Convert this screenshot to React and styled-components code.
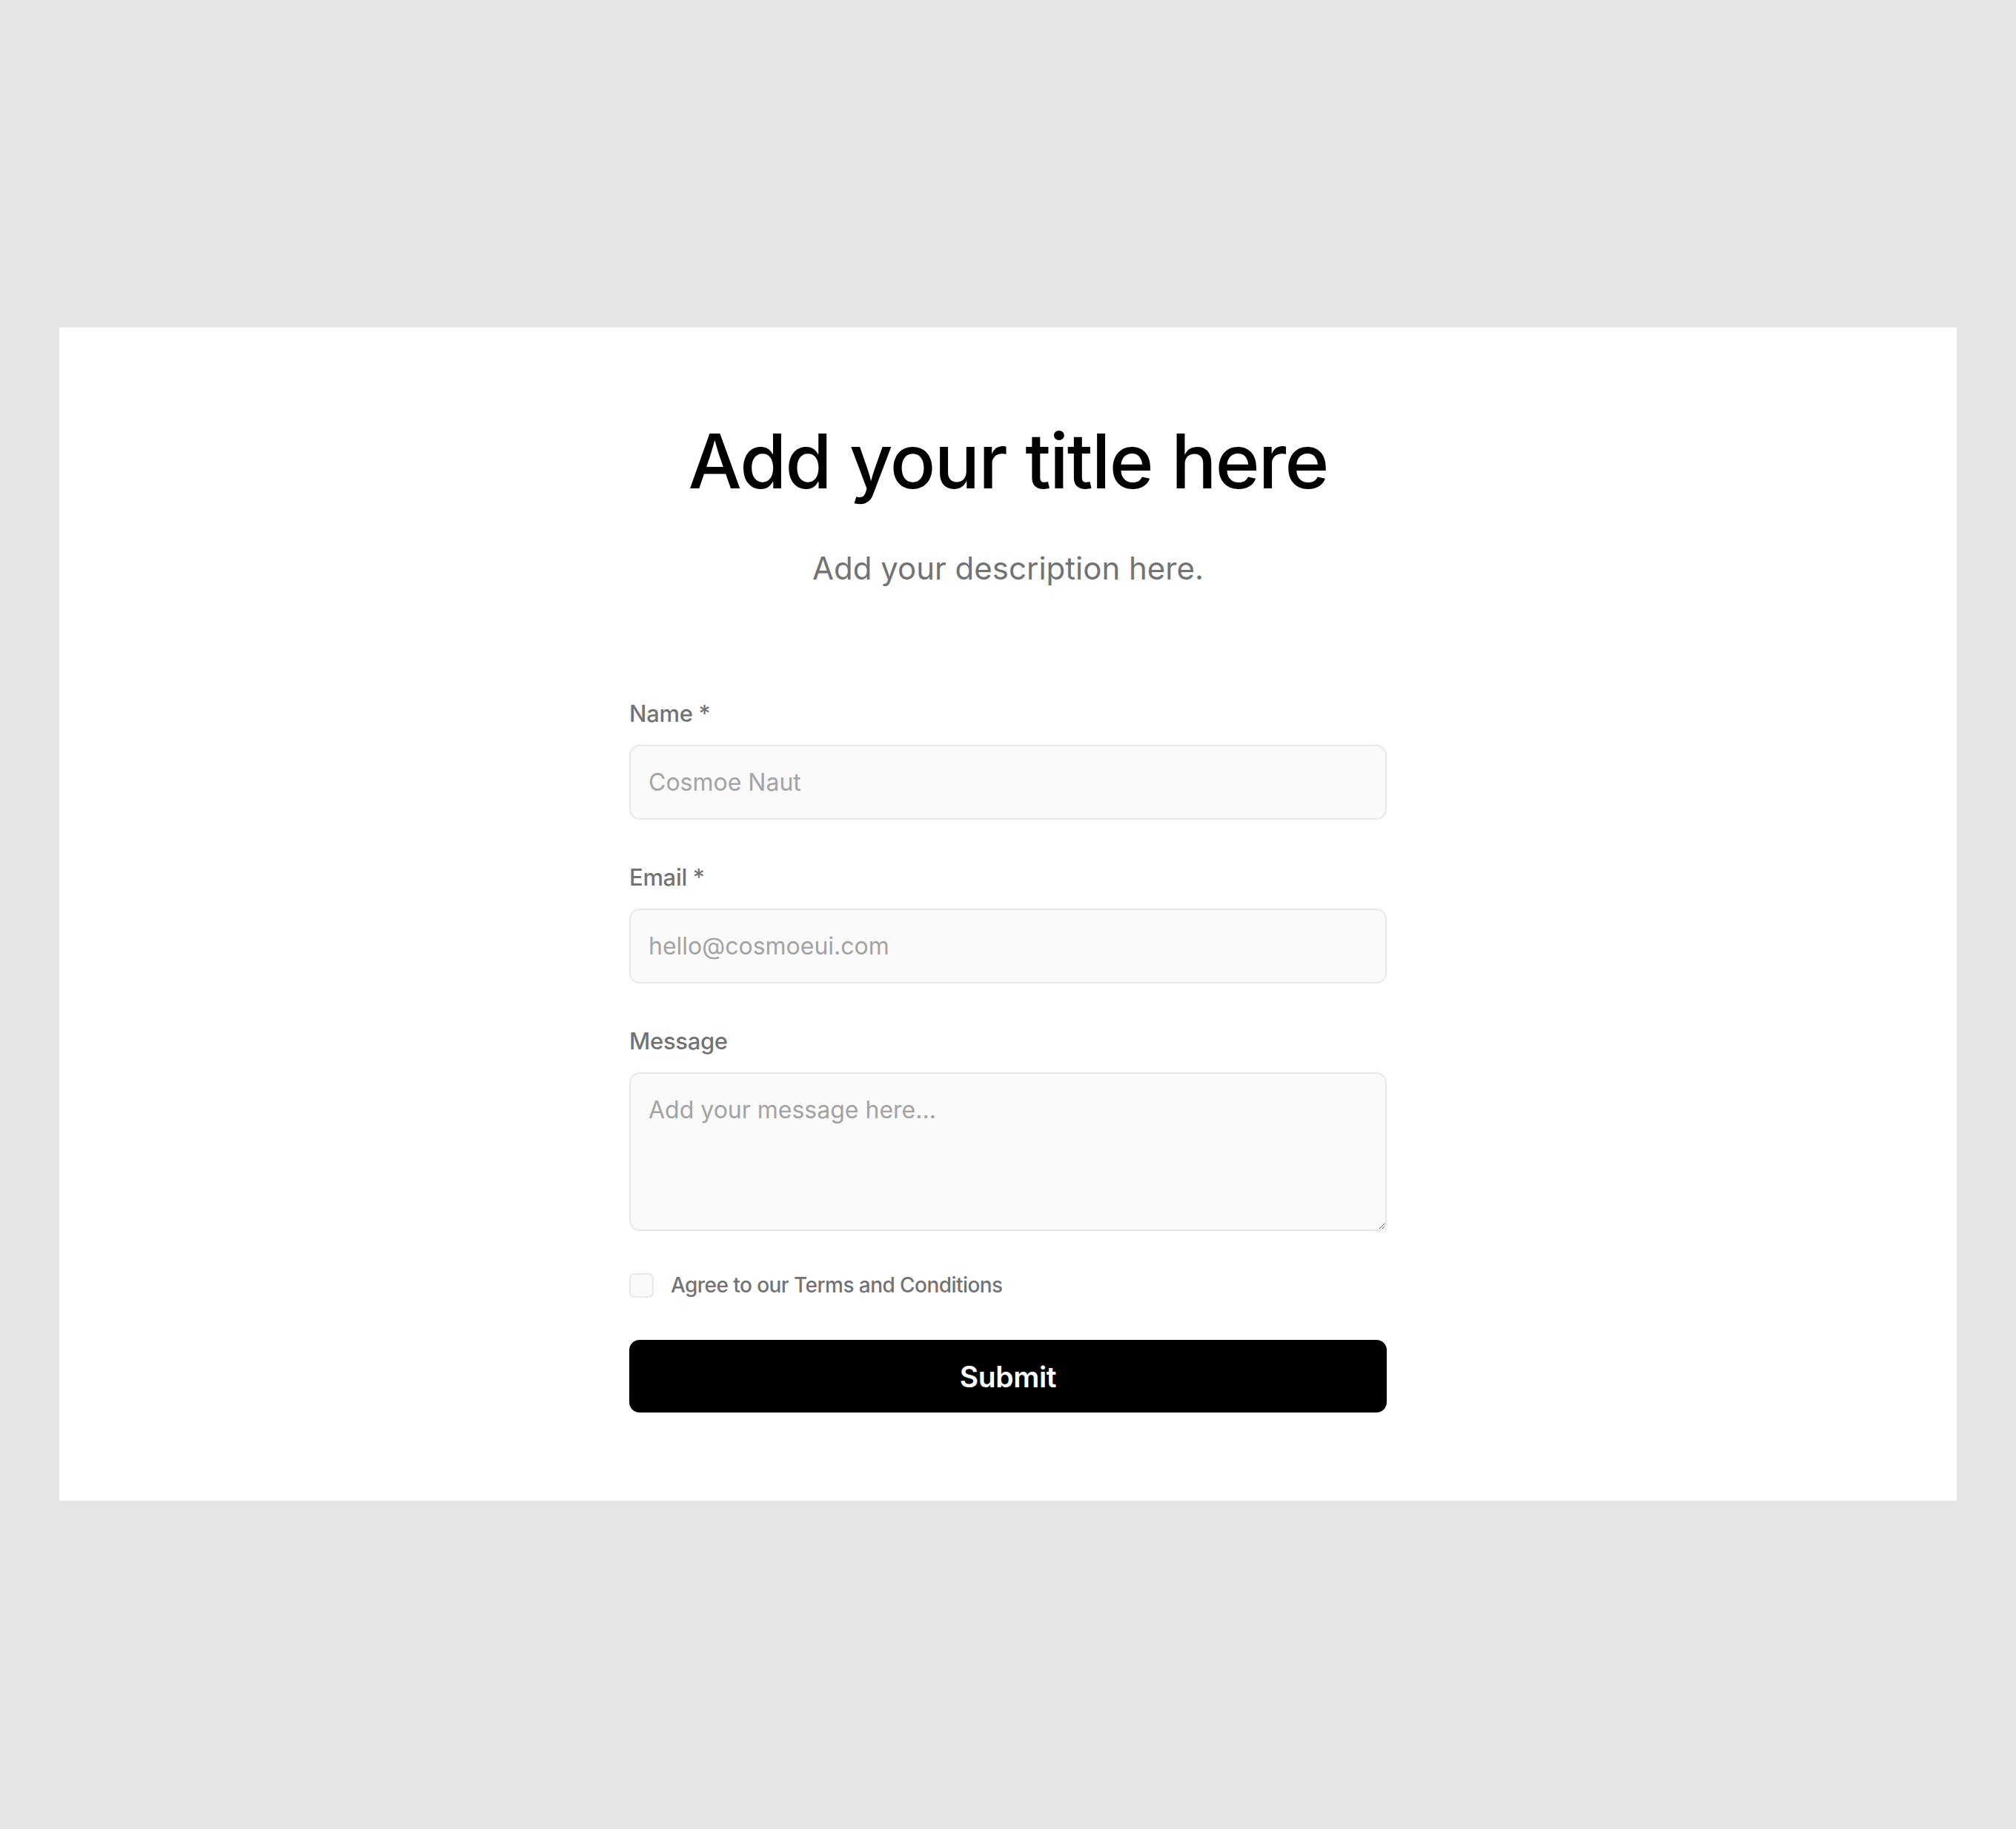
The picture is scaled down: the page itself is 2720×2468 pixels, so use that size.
import React from "react";
import styled, { createGlobalStyle } from "styled-components";

const GlobalStyle = createGlobalStyle`
  html, body {
    margin: 0;
    padding: 0;
    background: #e5e5e5;
  }
  * {
    box-sizing: border-box;
  }
`;

const Page = styled.div`
  min-height: 100vh;
  padding: 442px 80px 0 80px;
  font-family: Inter, "Noto Sans", sans-serif;
`;

const Card = styled.section`
  background: #ffffff;
  display: flex;
  flex-direction: column;
  align-items: center;
  padding: 119px 0 119px 0;
`;

const Title = styled.h1`
  margin: 0;
  font-size: 102px;
  line-height: 1.2;
  font-weight: 500;
  letter-spacing: -0.018em;
  color: #000000;
`;

const Description = styled.p`
  margin: 52px 0 0 0;
  font-size: 42px;
  line-height: 1.5;
  font-weight: 400;
  color: #737373;
`;

const Form = styled.form`
  width: 1022px;
  margin-top: 144px;
  display: flex;
  flex-direction: column;
  gap: 57px;
`;

const Field = styled.div`
  display: flex;
  flex-direction: column;
  gap: 21px;
`;

const Label = styled.label`
  font-size: 31px;
  line-height: 42px;
  font-weight: 500;
  letter-spacing: -0.01em;
  color: #737373;
`;

const inputBase = `
  width: 100%;
  border: 2px solid #e8e8e8;
  border-radius: 14px;
  background: #fafafa;
  font-family: Inter, "Noto Sans", sans-serif;
  font-size: 32px;
  color: #262626;
  outline: none;
  &::placeholder {
    color: #a3a3a3;
  }
`;

const Input = styled.input`
  ${inputBase}
  height: 101px;
  padding: 0 24px;
`;

const TextArea = styled.textarea`
  ${inputBase}
  height: 214px;
  padding: 25px 24px;
  line-height: 1.5;
  resize: vertical;
  display: block;
`;

const CheckRow = styled.label`
  display: flex;
  align-items: center;
  gap: 23px;
  font-size: 28px;
  line-height: 33px;
  font-weight: 500;
  letter-spacing: -0.02em;
  color: #737373;
  cursor: pointer;
`;

const Box = styled.span`
  width: 33px;
  height: 33px;
  border: 2px solid #e8e8e8;
  border-radius: 7px;
  background: #fafafa;
  flex-shrink: 0;
`;

const SubmitButton = styled.button`
  height: 98px;
  width: 100%;
  border: none;
  border-radius: 14px;
  background: #000000;
  color: #ffffff;
  font-family: Inter, "Noto Sans", sans-serif;
  font-size: 39px;
  font-weight: 600;
  letter-spacing: -0.01em;
  cursor: pointer;
`;

const App = () => {
  return (
    <Page>
      <GlobalStyle />
      <Card>
        <Title>Add your title here</Title>
        <Description>Add your description here.</Description>
        <Form onSubmit={(e) => e.preventDefault()}>
          <Field>
            <Label htmlFor="name">Name *</Label>
            <Input id="name" type="text" placeholder="Cosmoe Naut" />
          </Field>
          <Field>
            <Label htmlFor="email">Email *</Label>
            <Input id="email" type="email" placeholder="hello@cosmoeui.com" />
          </Field>
          <Field>
            <Label htmlFor="message">Message</Label>
            <TextArea id="message" placeholder="Add your message here…" />
          </Field>
          <CheckRow>
            <Box />
            Agree to our Terms and Conditions
          </CheckRow>
          <SubmitButton type="submit">Submit</SubmitButton>
        </Form>
      </Card>
    </Page>
  );
};

export default App;
